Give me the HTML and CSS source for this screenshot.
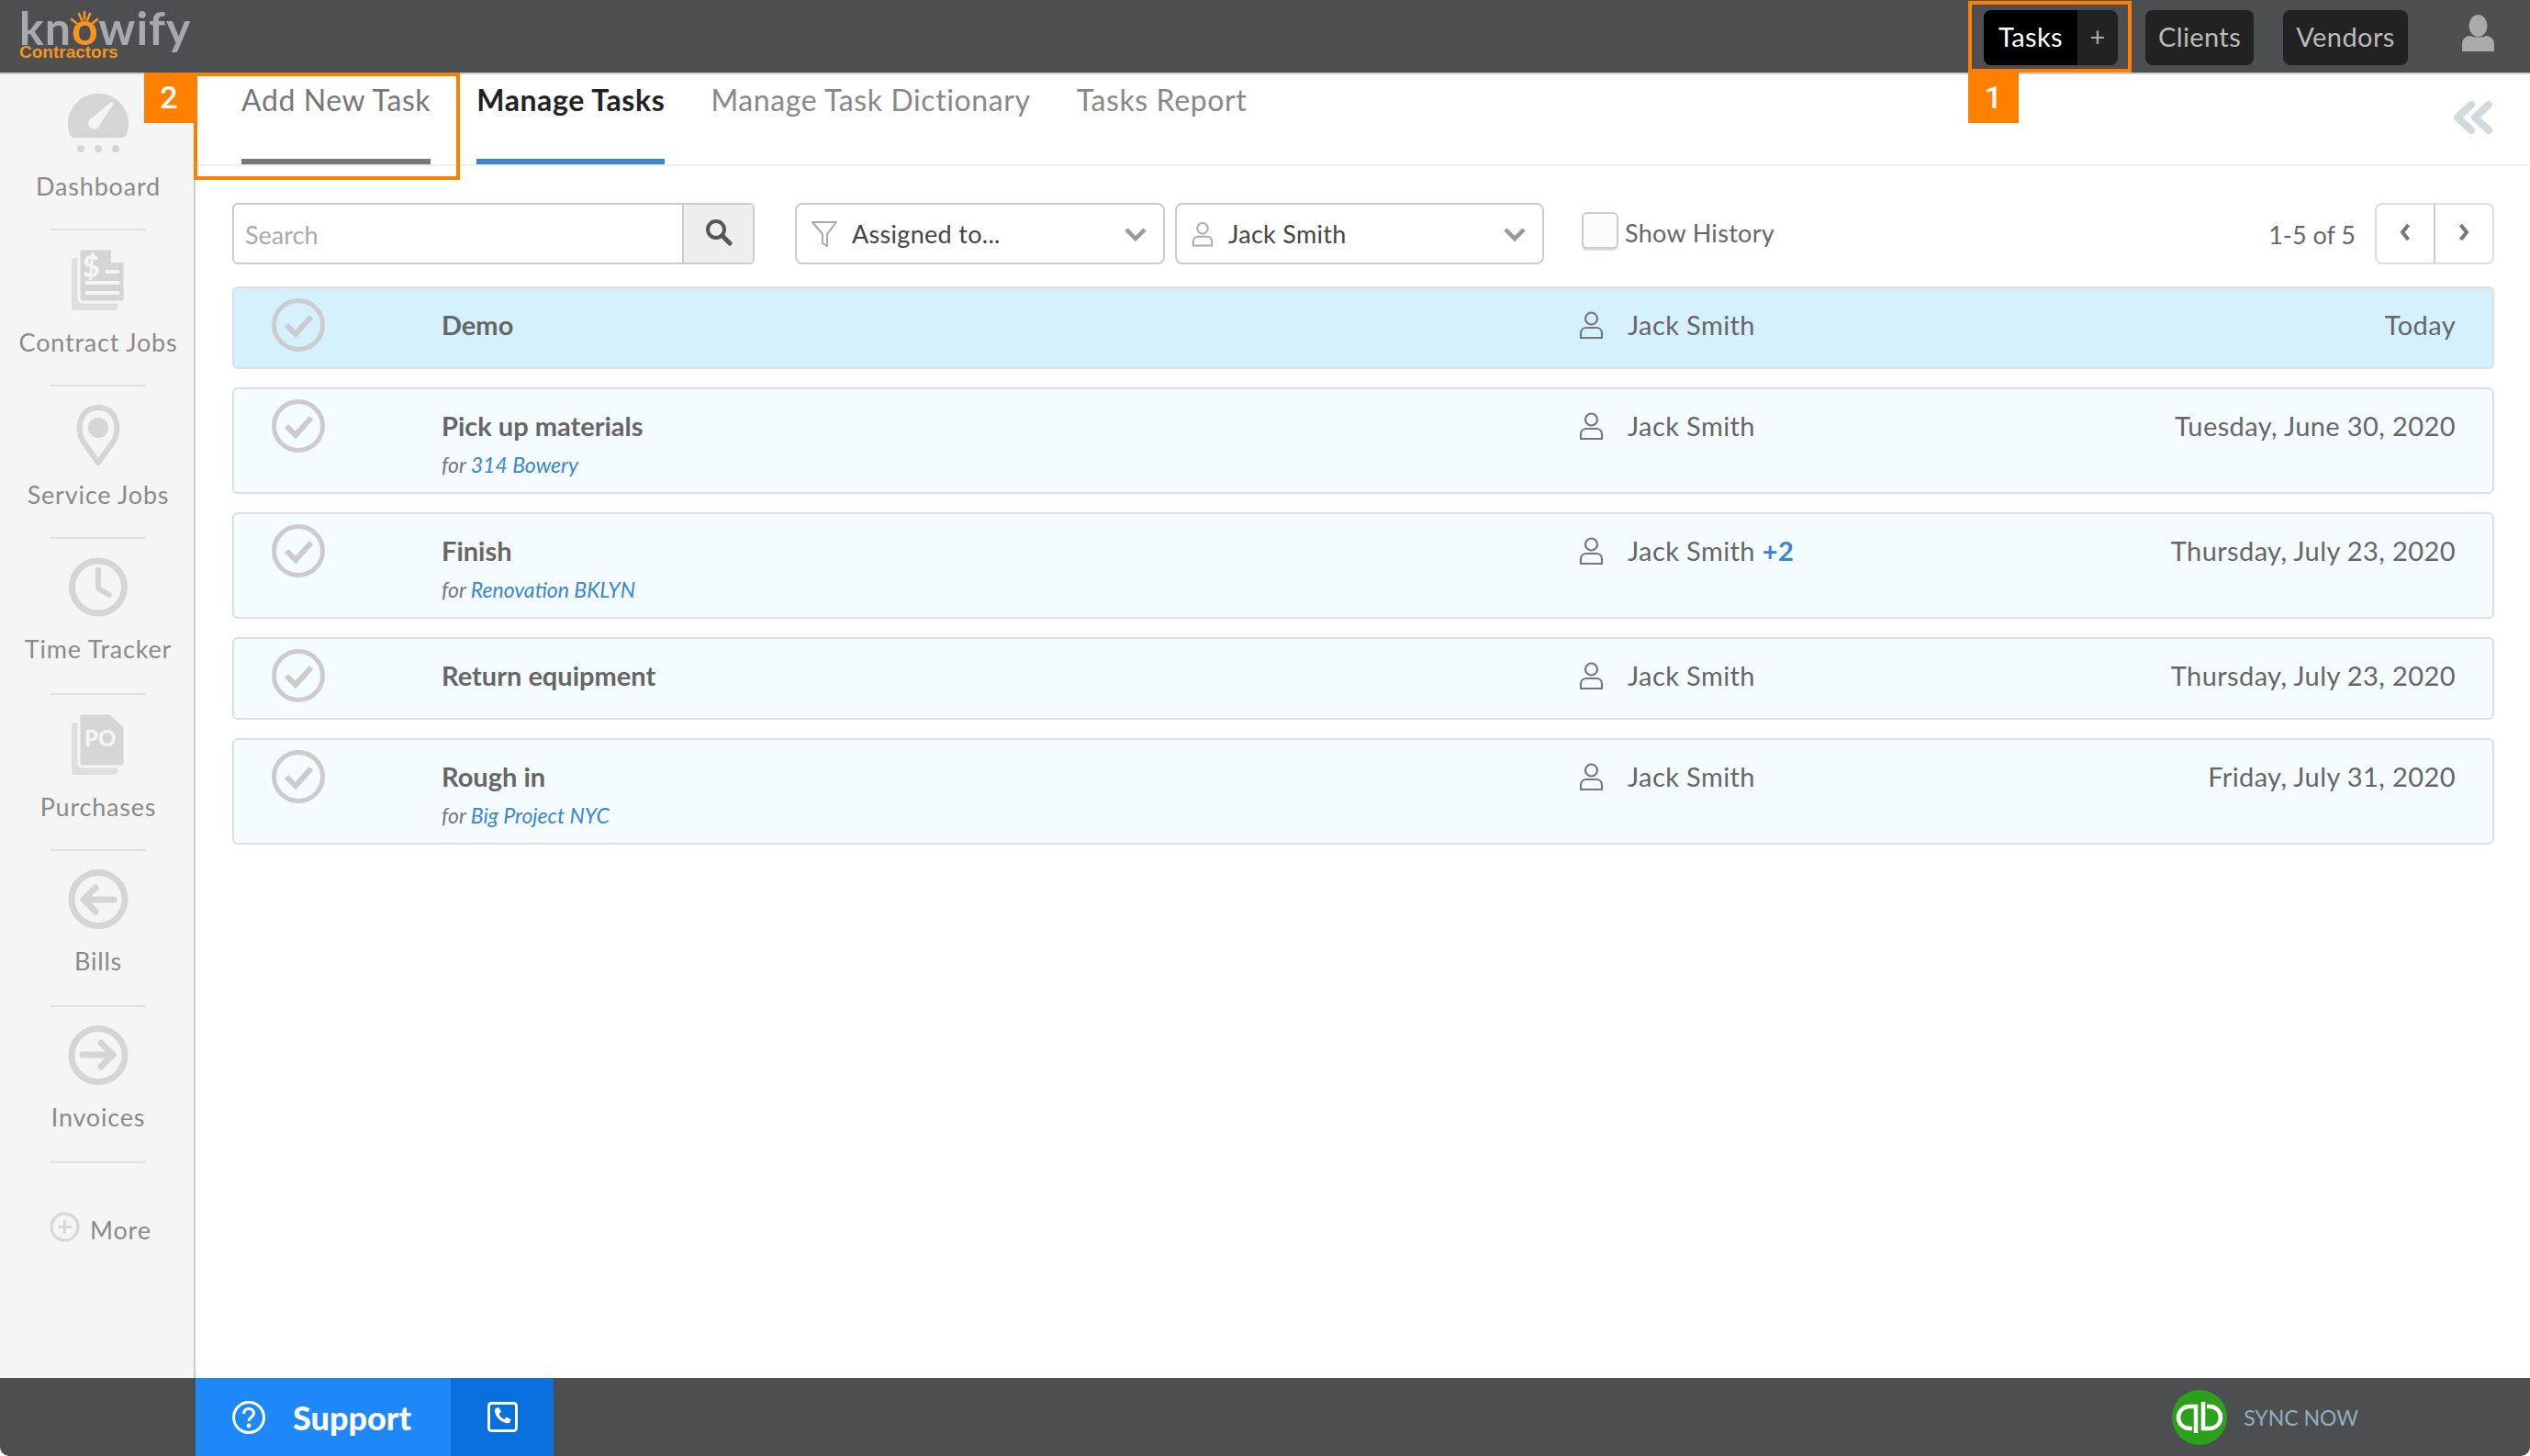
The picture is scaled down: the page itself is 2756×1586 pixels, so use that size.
FILE: index.html
```html
<!DOCTYPE html>
<html lang="en">

<head>
  <meta charset="UTF-8">
  <title>Knowify Tasks</title>
  <link rel="stylesheet" href="styles.css">
</head>

<body>
  <header class="topbar">
    <div class="logo">
      <div class="logo-name">kn<span class="logo-o">o</span>wify</div>
      <svg class="logo-rays" width="36" height="14" viewBox="0 0 36 14">
        <path d="M4 9l5 4M12 3l3 7M18 1v8M24 3l-3 7M32 9l-5 4" stroke="#f7941d" stroke-width="2.6" stroke-linecap="round" fill="none" />
      </svg>
      <div class="logo-sub">Contractors</div>
    </div>
    <nav class="top-nav">
      <div class="top-btn top-btn-split">
        <span class="top-btn-active">Tasks</span>
        <span class="top-btn-plus">+</span>
      </div>
      <div class="top-btn top-btn-clients">Clients</div>
      <div class="top-btn top-btn-vendors">Vendors</div>
      <svg class="top-user" width="35" height="40" viewBox="0 0 35 40">
        <ellipse cx="17.5" cy="12" rx="10" ry="12" fill="#aaa" />
        <path d="M0 40v-8c0-6 5-9 9-9 3 2 14 2 17 0 4 0 9 3 9 9v8z" fill="#aaa" />
      </svg>
    </nav>
  </header>

  <div class="highlight highlight-tasks"></div>
  <div class="marker marker-tasks">1</div>
  <div class="highlight highlight-add"></div>
  <div class="marker marker-add">2</div>

  <div class="layout">
    <aside class="sidebar">
      <div class="nav-item">
        <svg class="nav-icon" width="66" height="67" viewBox="0 0 66 67">
          <path d="M7 49c-3 0-4-1-5-4a33 33 0 1 1 62 0c-1 3-2 4-5 4z" fill="#d5d5d5" />
          <path d="M27 27l20-17 3 2-15 22a6.500 6.500 0 1 1-8-7z" fill="#f5f5f5" />
          <circle cx="14" cy="61" r="4" fill="#d5d5d5" />
          <circle cx="33" cy="61" r="4" fill="#d5d5d5" />
          <circle cx="52" cy="61" r="4" fill="#d5d5d5" />
        </svg>
        <div class="nav-label">Dashboard</div>
      </div>
      <div class="nav-item">
        <svg class="nav-icon" width="58" height="67" viewBox="0 0 58 67">
          <rect x="0" y="10" width="50" height="57" rx="4" fill="#dedede" />
          <path d="M12 0h31l15 15v39a4 4 0 0 1-4 4H12a4 4 0 0 1-4-4V4a4 4 0 0 1 4-4z" fill="#d5d5d5" stroke="#f5f5f5" stroke-width="3" />
          <path d="M43 1l14 14H43z" fill="#f5f5f5" />
          <text class="doc-dollar" x="12" y="31">$</text>
          <path d="M37 25h15M15 37h37M15 48h37" stroke="#f5f5f5" stroke-width="4" />
        </svg>
        <div class="nav-label">Contract Jobs</div>
      </div>
      <div class="nav-item nav-item-short">
        <svg class="nav-icon" width="50" height="67" viewBox="0 0 50 67">
          <path d="M25 63L8 39C1 28 4 3 25 3s24 25 17 36z" fill="none" stroke="#d5d5d5" stroke-width="6" stroke-linejoin="round" />
          <ellipse cx="25" cy="25" rx="11" ry="11" fill="#d5d5d5" />
        </svg>
        <div class="nav-label">Service Jobs</div>
      </div>
      <div class="nav-item">
        <svg class="nav-icon" width="64" height="65" viewBox="0 0 64 65">
          <circle cx="32" cy="32.500" r="28.500" fill="none" stroke="#d5d5d5" stroke-width="7" />
          <path d="M32 14v20l12 7" fill="none" stroke="#d5d5d5" stroke-width="6" stroke-linecap="round" stroke-linejoin="round" />
        </svg>
        <div class="nav-label">Time Tracker</div>
      </div>
      <div class="nav-item">
        <svg class="nav-icon" width="58" height="67" viewBox="0 0 58 67">
          <rect x="0" y="10" width="50" height="57" rx="4" fill="#dedede" />
          <path d="M12 0h30l16 15v39a4 4 0 0 1-4 4H12a4 4 0 0 1-4-4V4a4 4 0 0 1 4-4z" fill="#d5d5d5" stroke="#f5f5f5" stroke-width="3" />
          <text class="doc-po" x="14" y="36">PO</text>
        </svg>
        <div class="nav-label">Purchases</div>
      </div>
      <div class="nav-item">
        <svg class="nav-icon" width="66" height="65" viewBox="0 0 66 65">
          <circle cx="33" cy="32.500" r="29" fill="none" stroke="#d5d5d5" stroke-width="7" />
          <path d="M50 33H18M30 20L17 33l13 13" fill="none" stroke="#d5d5d5" stroke-width="7" stroke-linecap="round" stroke-linejoin="round" />
        </svg>
        <div class="nav-label">Bills</div>
      </div>
      <div class="nav-item">
        <svg class="nav-icon" width="66" height="65" viewBox="0 0 66 65">
          <circle cx="33" cy="32.500" r="29" fill="none" stroke="#d5d5d5" stroke-width="7" />
          <path d="M16 32h32M36 19l13 13-13 13" fill="none" stroke="#d5d5d5" stroke-width="7" stroke-linecap="round" stroke-linejoin="round" />
        </svg>
        <div class="nav-label">Invoices</div>
      </div>
      <div class="nav-more">
        <svg class="more-icon" width="33" height="33" viewBox="0 0 33 33">
          <circle cx="16.500" cy="16.500" r="14.500" fill="none" stroke="#d9d9d9" stroke-width="3.500" />
          <path d="M16.500 9v15M9 16.500h15" stroke="#d9d9d9" stroke-width="3" />
        </svg>
        <span class="nav-label">More</span>
      </div>
    </aside>

    <main class="content">
      <div class="tabs">
        <div class="tab tab-add">Add New Task</div>
        <div class="tab tab-current">Manage Tasks</div>
        <div class="tab">Manage Task Dictionary</div>
        <div class="tab">Tasks Report</div>
        <svg class="collapse-icon" width="44" height="36" viewBox="0 0 44 36">
          <path d="M20 4L5 18l15 14M39 4L24 18l15 14" fill="none" stroke="#d0d9dd" stroke-width="8" stroke-linecap="round" stroke-linejoin="round" />
        </svg>
      </div>

      <div class="toolbar">
        <div class="search">
          <div class="search-input">Search</div>
          <div class="search-btn">
            <svg width="30" height="30" viewBox="0 0 30 30">
              <circle cx="12" cy="12" r="9" fill="none" stroke="#555" stroke-width="4" />
              <path d="M18.500 18.500L27 27" stroke="#555" stroke-width="5" stroke-linecap="round" />
            </svg>
          </div>
        </div>
        <div class="select select-assigned">
          <svg class="select-icon" width="28" height="28" viewBox="0 0 28 28">
            <path d="M1 1h26L17 14v13l-5-3V14z" fill="none" stroke="#aaa" stroke-width="2" stroke-linejoin="round" />
          </svg>
          <span class="select-text">Assigned to...</span>
          <svg class="chevron" width="24" height="16" viewBox="0 0 24 16">
            <path d="M2 3l10 10L22 3" fill="none" stroke="#999" stroke-width="4.500" />
          </svg>
        </div>
        <div class="select select-person">
          <svg class="select-icon" width="24" height="28" viewBox="0 0 27 30">
            <circle cx="13.500" cy="8" r="6.500" fill="none" stroke="#aaa" stroke-width="2.200" />
            <path d="M2 29v-5c0-4 3-6 6-6h11c3 0 6 2 6 6v5z" fill="none" stroke="#aaa" stroke-width="2.200" stroke-linejoin="round" />
          </svg>
          <span class="select-text">Jack Smith</span>
          <svg class="chevron" width="24" height="16" viewBox="0 0 24 16">
            <path d="M2 3l10 10L22 3" fill="none" stroke="#999" stroke-width="4.500" />
          </svg>
        </div>
        <div class="history">
          <div class="checkbox"></div>
          <span>Show History</span>
        </div>
        <div class="pager-count">1-5 of 5</div>
        <div class="pager">
          <div class="pager-btn">
            <svg width="12" height="20" viewBox="0 0 12 20">
              <path d="M9.500 2L3 10l6.500 8" fill="none" stroke="#777" stroke-width="4" />
            </svg>
          </div>
          <div class="pager-btn pager-next">
            <svg width="12" height="20" viewBox="0 0 12 20">
              <path d="M2.500 2L9 10l-6.500 8" fill="none" stroke="#777" stroke-width="4" />
            </svg>
          </div>
        </div>
      </div>

      <div class="task-list">
        <div class="task task-today">
          <svg class="task-check" width="58" height="58" viewBox="0 0 58 58">
            <circle cx="29" cy="29" r="26.500" fill="none" stroke="#ccc" stroke-width="5" />
            <path d="M16 29l10 10 17-19" fill="none" stroke="#ccc" stroke-width="6" />
          </svg>
          <div class="task-main">
            <div class="task-title">Demo</div>
          </div>
          <div class="task-person">
            <svg class="person-icon" width="27" height="30" viewBox="0 0 27 30">
              <circle cx="13.500" cy="8" r="6.500" fill="none" stroke="#777" stroke-width="2.200" />
              <path d="M2 29v-5c0-4 3-6 6-6h11c3 0 6 2 6 6v5z" fill="none" stroke="#777" stroke-width="2.200" stroke-linejoin="round" />
            </svg>
            <span>Jack Smith</span>
          </div>
          <div class="task-date">Today</div>
        </div>

        <div class="task">
          <svg class="task-check" width="58" height="58" viewBox="0 0 58 58">
            <circle cx="29" cy="29" r="26.500" fill="none" stroke="#ccc" stroke-width="5" />
            <path d="M16 29l10 10 17-19" fill="none" stroke="#ccc" stroke-width="6" />
          </svg>
          <div class="task-main">
            <div class="task-title">Pick up materials</div>
            <div class="task-sub">for <span class="task-link">314 Bowery</span></div>
          </div>
          <div class="task-person">
            <svg class="person-icon" width="27" height="30" viewBox="0 0 27 30">
              <circle cx="13.500" cy="8" r="6.500" fill="none" stroke="#777" stroke-width="2.200" />
              <path d="M2 29v-5c0-4 3-6 6-6h11c3 0 6 2 6 6v5z" fill="none" stroke="#777" stroke-width="2.200" stroke-linejoin="round" />
            </svg>
            <span>Jack Smith</span>
          </div>
          <div class="task-date">Tuesday, June 30, 2020</div>
        </div>

        <div class="task">
          <svg class="task-check" width="58" height="58" viewBox="0 0 58 58">
            <circle cx="29" cy="29" r="26.500" fill="none" stroke="#ccc" stroke-width="5" />
            <path d="M16 29l10 10 17-19" fill="none" stroke="#ccc" stroke-width="6" />
          </svg>
          <div class="task-main">
            <div class="task-title">Finish</div>
            <div class="task-sub">for <span class="task-link">Renovation BKLYN</span></div>
          </div>
          <div class="task-person">
            <svg class="person-icon" width="27" height="30" viewBox="0 0 27 30">
              <circle cx="13.500" cy="8" r="6.500" fill="none" stroke="#777" stroke-width="2.200" />
              <path d="M2 29v-5c0-4 3-6 6-6h11c3 0 6 2 6 6v5z" fill="none" stroke="#777" stroke-width="2.200" stroke-linejoin="round" />
            </svg>
            <span>Jack Smith <span class="task-more">+2</span></span>
          </div>
          <div class="task-date">Thursday, July 23, 2020</div>
        </div>

        <div class="task">
          <svg class="task-check" width="58" height="58" viewBox="0 0 58 58">
            <circle cx="29" cy="29" r="26.500" fill="none" stroke="#ccc" stroke-width="5" />
            <path d="M16 29l10 10 17-19" fill="none" stroke="#ccc" stroke-width="6" />
          </svg>
          <div class="task-main">
            <div class="task-title">Return equipment</div>
          </div>
          <div class="task-person">
            <svg class="person-icon" width="27" height="30" viewBox="0 0 27 30">
              <circle cx="13.500" cy="8" r="6.500" fill="none" stroke="#777" stroke-width="2.200" />
              <path d="M2 29v-5c0-4 3-6 6-6h11c3 0 6 2 6 6v5z" fill="none" stroke="#777" stroke-width="2.200" stroke-linejoin="round" />
            </svg>
            <span>Jack Smith</span>
          </div>
          <div class="task-date">Thursday, July 23, 2020</div>
        </div>

        <div class="task">
          <svg class="task-check" width="58" height="58" viewBox="0 0 58 58">
            <circle cx="29" cy="29" r="26.500" fill="none" stroke="#ccc" stroke-width="5" />
            <path d="M16 29l10 10 17-19" fill="none" stroke="#ccc" stroke-width="6" />
          </svg>
          <div class="task-main">
            <div class="task-title">Rough in</div>
            <div class="task-sub">for <span class="task-link">Big Project NYC</span></div>
          </div>
          <div class="task-person">
            <svg class="person-icon" width="27" height="30" viewBox="0 0 27 30">
              <circle cx="13.500" cy="8" r="6.500" fill="none" stroke="#777" stroke-width="2.200" />
              <path d="M2 29v-5c0-4 3-6 6-6h11c3 0 6 2 6 6v5z" fill="none" stroke="#777" stroke-width="2.200" stroke-linejoin="round" />
            </svg>
            <span>Jack Smith</span>
          </div>
          <div class="task-date">Friday, July 31, 2020</div>
        </div>
      </div>
    </main>
  </div>

  <footer class="footer">
    <div class="support">
      <svg width="36" height="36" viewBox="0 0 36 36">
        <circle cx="18" cy="18" r="16.500" fill="none" stroke="#fff" stroke-width="3" />
        <path d="M12.500 14c0-3.500 2.500-5.500 5.500-5.500s5.500 2 5.500 5c0 4.500-5.500 4-5.500 8.500" fill="none" stroke="#fff" stroke-width="3.200" />
        <circle cx="18" cy="27" r="2.400" fill="#fff" />
      </svg>
      <span class="support-label">Support</span>
    </div>
    <div class="support-phone">
      <svg width="33" height="33" viewBox="0 0 33 33">
        <rect x="1.500" y="1.500" width="30" height="30" rx="3" fill="none" stroke="#fff" stroke-width="3" />
        <path d="M9 7l3.500-1 2.500 5-2.500 2c1 3 3 5 6 6l2-2.500 5 2.500-1 3.500c-1 1-3 1-5 .5C13 21 9 16 8 10.500 8 9 8.300 8 9 7z" fill="#fff" />
      </svg>
    </div>
    <div class="sync">
      <svg width="60" height="60" viewBox="0 0 60 60">
        <circle cx="30" cy="30" r="30" fill="#2ca01c" />
        <path d="M22 42h-3a11 11 0 0 1 0-24h7v29" fill="none" stroke="#fff" stroke-width="4.500" />
        <path d="M38 18h3a11 11 0 0 1 0 24h-7V13" fill="none" stroke="#fff" stroke-width="4.500" />
      </svg>
      <span class="sync-label">SYNC NOW</span>
    </div>
  </footer>
</body>

</html>
```

FILE: styles.css
```css
body {
  margin: 0;
  width: 2756px;
  height: 1586px;
  position: relative;
  overflow: hidden;
  background: #fff;
  font-family: Lato, "Open Sans", sans-serif;
  color: #666;
  display: flex;
  flex-direction: column;
}

.topbar {
  height: 79px;
  flex: none;
  background: #4d4e50;
  border-bottom: 2px solid #ccc;
  display: flex;
  justify-content: space-between;
}

.logo {
  position: relative;
  padding: 4px 0 0 21px;
}

.logo-name {
  font-size: 50px;
  line-height: 52px;
  font-weight: 700;
  letter-spacing: 1px;
  color: #a7a9ac;
}

.logo-o {
  color: #f7941d;
}

.logo-rays {
  position: absolute;
  left: 74px;
  top: 12px;
}

.logo-sub {
  margin-top: -9px;
  font-family: "Liberation Sans", Arial, sans-serif;
  font-size: 19px;
  line-height: 20px;
  font-weight: 700;
  color: #f7941d;
}

.top-nav {
  display: flex;
  align-items: flex-start;
  padding: 11px 39px 0 0;
}

.top-btn {
  height: 60px;
  border-radius: 8px;
  background: #222;
  color: #bbb;
  font-size: 29px;
  line-height: 58px;
  letter-spacing: .4px;
  text-align: center;
}

.top-btn-split {
  width: 146px;
  display: flex;
  overflow: hidden;
}

.top-btn-active {
  width: 102px;
  background: #000;
  color: #fff;
}

.top-btn-plus {
  flex: 1;
  color: #aaa;
}

.top-btn-clients {
  width: 118px;
  margin-left: 30px;
}

.top-btn-vendors {
  width: 136px;
  margin-left: 32px;
}

.top-user {
  margin: 5px 0 0 59px;
}

.highlight {
  position: absolute;
  box-sizing: border-box;
  border: 4px solid #ff7f00;
  z-index: 2;
}

.highlight-tasks {
  left: 2144px;
  top: 1px;
  width: 178px;
  height: 78px;
}

.highlight-add {
  left: 211px;
  top: 79px;
  width: 290px;
  height: 117px;
}

.marker {
  position: absolute;
  z-index: 2;
  top: 79px;
  height: 55px;
  background: #ff7f00;
  color: #fff;
  font-family: Roboto, sans-serif;
  font-size: 34px;
  font-weight: 500;
  line-height: 55px;
  text-align: center;
}

.marker-tasks {
  left: 2144px;
  width: 55px;
}

.marker-add {
  left: 157px;
  width: 54px;
}

.layout {
  flex: 1;
  display: flex;
  min-height: 0;
}

.sidebar {
  width: 211px;
  flex: none;
  background: #f5f5f5;
  border-right: 2px solid #ccc;
}

.nav-item {
  width: 104px;
  height: 170px;
  margin-left: 55px;
  box-sizing: border-box;
  padding-top: 20px;
  border-bottom: 2px solid #e0e0e0;
  display: flex;
  flex-direction: column;
  align-items: center;
}

.nav-item-short {
  height: 166px;
}

.nav-item-short .nav-icon {
  margin-bottom: -4px;
}

.nav-icon {
  flex: none;
}

.nav-label {
  margin-top: 17px;
  font-size: 27px;
  line-height: 36px;
  letter-spacing: .8px;
  color: #8a8a8a;
  white-space: nowrap;
}

.doc-dollar {
  font-family: Lato, sans-serif;
  font-size: 32px;
  font-weight: 900;
  fill: #f5f5f5;
}

.doc-po {
  font-family: Lato, sans-serif;
  font-size: 24px;
  font-weight: 900;
  fill: #f5f5f5;
}

.nav-more {
  display: flex;
  align-items: flex-start;
  margin: 53px 0 0 54px;
}

.more-icon {
  margin-right: 11px;
}

.nav-more .nav-label {
  margin-top: 2px;
}

.content {
  flex: 1;
  min-width: 0;
}

.tabs {
  height: 98px;
  padding-left: 50px;
  border-bottom: 2px solid #eee;
  display: flex;
  gap: 50px;
  position: relative;
}

.tab {
  height: 92px;
  line-height: 56px;
  padding-top: 0;
  font-size: 32px;
  letter-spacing: .6px;
  color: #888;
  border-bottom: 6px solid transparent;
}

.tab-add {
  color: #777;
  border-bottom-color: #777;
}

.tab-current {
  color: #222;
  font-weight: 700;
  border-bottom-color: #3a86d0;
}

.collapse-icon {
  position: absolute;
  right: 40px;
  top: 29px;
}

.toolbar {
  display: flex;
  align-items: flex-start;
  margin: 40px 39px 21px 40px;
  font-size: 27px;
}

.search {
  width: 569px;
  height: 67px;
  box-sizing: border-box;
  display: flex;
  border: 2px solid #ccc;
  border-radius: 6px;
  overflow: hidden;
}

.search-input {
  flex: 1;
  padding-left: 12px;
  line-height: 65px;
  color: #aaa;
}

.search-btn {
  width: 77px;
  background: #eee;
  border-left: 2px solid #ccc;
  display: flex;
  justify-content: center;
  align-items: flex-start;
  padding-top: 15px;
  box-sizing: border-box;
}

.select {
  height: 67px;
  box-sizing: border-box;
  border: 2px solid #ccc;
  border-radius: 8px;
  display: flex;
  align-items: center;
  color: #444;
}

.select-assigned {
  width: 403px;
  margin-left: 44px;
  padding: 0 18px 0 16px;
}

.select-person {
  width: 402px;
  margin-left: 11px;
  padding: 0 18px 0 16px;
}

.select-text {
  flex: 1;
  padding-left: 16px;
  letter-spacing: .3px;
}

.history {
  display: flex;
  align-items: flex-start;
  margin-left: 41px;
  line-height: 46px;
  padding-top: 10px;
  color: #666;
  letter-spacing: .3px;
}

.checkbox {
  width: 40px;
  height: 40px;
  box-sizing: border-box;
  background: #fbfbfb;
  border: 2px solid #ccc;
  border-radius: 6px;
  box-shadow: 0 2px 1px #ddd;
  margin-right: 7px;
}

.pager-count {
  margin-left: auto;
  line-height: 70px;
  color: #666;
}

.pager {
  width: 130px;
  height: 67px;
  margin-left: 21px;
  box-sizing: border-box;
  border: 2px solid #ddd;
  border-radius: 8px;
  display: flex;
}

.pager-btn {
  flex: 1;
  display: flex;
  justify-content: center;
  padding-top: 20px;
}

.pager-next {
  border-left: 2px solid #ccc;
}

.task-list {
  display: flex;
  flex-direction: column;
  gap: 20px;
  margin: 0 39px 0 40px;
}

.task {
  min-height: 90px;
  box-sizing: border-box;
  background: #f4fcff;
  border: 2px solid #dcdfe0;
  border-radius: 6px;
  display: flex;
  align-items: flex-start;
  font-size: 29px;
}

.task-today {
  background: #d5f1fe;
}

.task-check {
  flex: none;
  margin: 11px 127px 0 41px;
}

.task-main {
  width: 1239px;
  flex: none;
  padding-top: 20px;
}

.task-title {
  line-height: 40px;
  font-weight: 700;
  color: #666;
}

.task-sub {
  margin-top: 8px;
  padding-bottom: 16px;
  font-size: 23px;
  line-height: 28px;
  font-style: italic;
  color: #777;
}

.task-link {
  color: #3a86d0;
}

.task-person {
  display: flex;
  align-items: flex-start;
  padding-top: 20px;
  line-height: 40px;
  color: #666;
  letter-spacing: .4px;
}

.person-icon {
  margin: 5px 26px 0 0;
}

.task-more {
  color: #3a86d0;
  font-weight: 700;
}

.task-date {
  margin-left: auto;
  padding: 20px 40px 0 0;
  line-height: 40px;
  color: #666;
  letter-spacing: .4px;
}

.footer {
  height: 85px;
  flex: none;
  background: #4d4e50;
  border-radius: 0 0 10px 10px;
  display: flex;
  padding-left: 213px;
}

.support {
  width: 278px;
  box-sizing: border-box;
  background: #1e88f8;
  padding-left: 40px;
  display: flex;
  align-items: center;
}

.support-label {
  margin-left: 30px;
  font-size: 36px;
  font-weight: 900;
  color: #fff;
}

.support-phone {
  width: 112px;
  background: #0a70dd;
  display: flex;
  justify-content: center;
  align-items: center;
}

.sync {
  margin-left: auto;
  padding-right: 187px;
  display: flex;
  align-items: center;
}

.sync-label {
  margin-left: 18px;
  font-size: 23px;
  color: #8fb0bd;
}
```
